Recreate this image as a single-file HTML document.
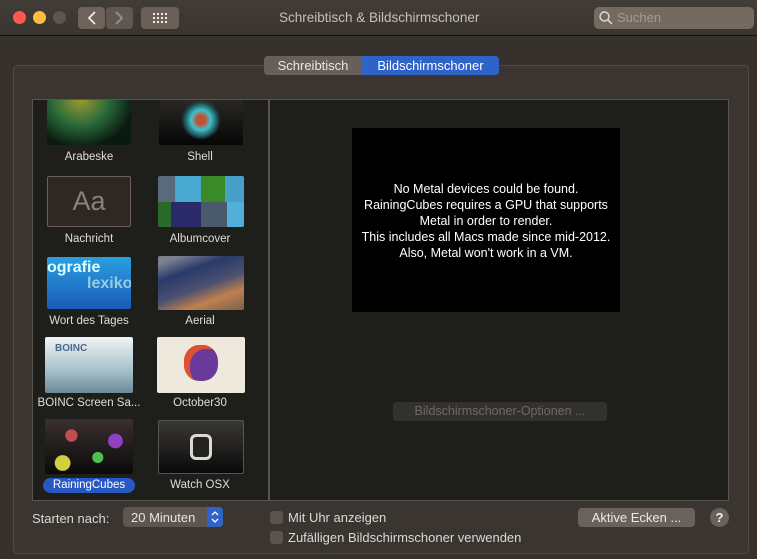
<!DOCTYPE html>
<html><head><meta charset="utf-8"><style>
*{box-sizing:border-box;margin:0;padding:0}
body{width:757px;height:559px;background:#36312d;font-family:"Liberation Sans",sans-serif;color:#dcd8d4;position:relative;overflow:hidden;font-size:13px}
.abs{position:absolute}
.tb{left:0;top:0;width:757px;height:36px;background:linear-gradient(#423c37,#3a3531);border-bottom:1px solid #111}
.dot{width:13px;height:13px;border-radius:50%;top:11px}
.btn{background:#6a6057;border-radius:4px}
.lbl{font-size:11.5px;color:#e0dcd8;text-align:center;white-space:nowrap}
.th{border-radius:2px;overflow:hidden}
.cb{width:13px;height:13px;border-radius:3px;background:#5a534d}
</style></head><body>
<div class="abs tb"></div>
<div class="abs dot" style="left:13px;background:#fc5753"></div>
<div class="abs dot" style="left:33px;background:#fdbc40"></div>
<div class="abs dot" style="left:53px;background:#5b5550"></div>
<div class="abs btn" style="left:78px;top:7px;width:27px;height:22px;background:#6d635a"></div>
<div class="abs btn" style="left:106px;top:7px;width:27px;height:22px;background:#605750"></div>
<svg class="abs" style="left:78px;top:7px" width="56" height="22"><path d="M17 5 L11 11 L17 17" stroke="#eee" stroke-width="1.8" fill="none"/><path d="M38 5 L44 11 L38 17" stroke="#9a918a" stroke-width="1.8" fill="none"/></svg>
<div class="abs btn" style="left:141px;top:7px;width:38px;height:22px"></div>
<svg class="abs" style="left:152px;top:12px" width="16" height="12"><g fill="#eee"><rect x="1" y="1" width="2" height="2"/><rect x="5" y="1" width="2" height="2"/><rect x="9" y="1" width="2" height="2"/><rect x="13" y="1" width="2" height="2"/><rect x="1" y="5" width="2" height="2"/><rect x="5" y="5" width="2" height="2"/><rect x="9" y="5" width="2" height="2"/><rect x="13" y="5" width="2" height="2"/><rect x="1" y="9" width="2" height="2"/><rect x="5" y="9" width="2" height="2"/><rect x="9" y="9" width="2" height="2"/><rect x="13" y="9" width="2" height="2"/></g></svg>
<div class="abs" style="left:279px;top:10px;font-size:13.5px;color:#c5bfb9">Schreibtisch &amp; Bildschirmschoner</div>
<div class="abs" style="left:594px;top:7px;width:160px;height:22px;background:#756a5f;border-radius:5px"></div>
<svg class="abs" style="left:598px;top:10px" width="16" height="16"><circle cx="6.5" cy="6.5" r="4.5" stroke="#ddd" stroke-width="1.4" fill="none"/><path d="M10 10 L14 14" stroke="#ddd" stroke-width="1.5"/></svg>
<div class="abs" style="left:617px;top:10px;color:#a59a8f">Suchen</div>

<div class="abs" style="left:13px;top:65px;width:736px;height:489px;border:1px solid #514a44;border-radius:5px;background:#3a3531"></div>
<div class="abs" style="left:264px;top:56px;width:235px;height:19px;border-radius:4px;background:#67605a"></div>
<div class="abs" style="left:362px;top:56px;width:137px;height:19px;border-radius:0 4px 4px 0;background:#2f63c8"></div>
<div class="abs" style="left:264px;top:58px;width:98px;text-align:center;color:#eae6e2">Schreibtisch</div>
<div class="abs" style="left:362px;top:58px;width:137px;text-align:center;color:#fff">Bildschirmschoner</div>

<div class="abs" style="left:32px;top:99px;width:697px;height:402px;border:1px solid #5a544e;background:#1e1e1a"></div>
<div class="abs" style="left:268px;top:99px;width:2px;height:402px;background:#5a544e"></div>
<div class="abs" style="left:352px;top:128px;width:268px;height:184px;background:#000"></div>
<div class="abs" style="left:352px;top:181px;width:268px;text-align:center;color:#fff;font-size:12.5px;line-height:16px">No Metal devices could be found.<br>RainingCubes requires a GPU that supports<br>Metal in order to render.<br>This includes all Macs made since mid-2012.<br>Also, Metal won't work in a VM.</div>
<div class="abs" style="left:393px;top:402px;width:214px;height:19px;border-radius:3px;background:#33312d;color:#6f6a65;text-align:center;line-height:19px;font-size:12.5px">Bildschirmschoner-Optionen ...</div>

<div class="abs th" style="left:47px;top:100px;width:84px;height:45px;background:radial-gradient(ellipse at 40% 0%,#9a9a30,#2a6a3a 40%,#0a1a10 75%)"></div>
<div class="abs th" style="left:159px;top:100px;width:84px;height:45px;background:linear-gradient(#2a2824,#060606)"><div style="margin:0 auto;width:40px;height:40px;border-radius:50%;background:radial-gradient(#c05030 15%,#40c0d0 35%,#1a4a4a 60%,transparent 70%)"></div></div>
<div class="abs lbl" style="left:40px;top:151px;width:98px">Arabeske</div>
<div class="abs lbl" style="left:151px;top:151px;width:98px">Shell</div>

<div class="abs th" style="left:47px;top:176px;width:84px;height:51px;background:#2d2823;border:1px solid #6a6058;font-size:27px;color:#8a8078;text-align:center;line-height:48px">Aa</div>
<div class="abs th" style="left:158px;top:176px;width:86px;height:51px;background:linear-gradient(90deg,#5a6a7a 0 20%,#48a8d0 20% 50%,#3a8a2a 50% 78%,#48a0c8 78%)"><div style="margin-top:26px;height:25px;background:linear-gradient(90deg,#2a6a2a 0 15%,#2a2a6a 15% 50%,#4a5a6a 50% 80%,#50b0d8 80%)"></div></div>
<div class="abs lbl" style="left:40px;top:233px;width:98px">Nachricht</div>
<div class="abs lbl" style="left:151px;top:233px;width:98px">Albumcover</div>

<div class="abs th" style="left:47px;top:257px;width:84px;height:52px;background:linear-gradient(#2aa0e0,#1a5ab8);color:#dff;font-weight:bold;font-size:16px;line-height:16px;overflow:hidden;padding-top:3px">ografie<br><span style="padding-left:40px;color:#9cd">lexiko</span></div>
<div class="abs th" style="left:158px;top:256px;width:86px;height:54px;background:linear-gradient(160deg,#7a8090 0 10%,#2a3a6a 30%,#4a5070 55%,#c08050 75%,#7a6050)"></div>
<div class="abs lbl" style="left:40px;top:315px;width:98px">Wort des Tages</div>
<div class="abs lbl" style="left:151px;top:315px;width:98px">Aerial</div>

<div class="abs th" style="left:45px;top:337px;width:88px;height:56px;background:linear-gradient(#f0f4f6,#a8c0c8 60%,#6a8a98)"><div style="margin:6px 0 0 10px;color:#4a6a8a;font-size:10px;font-weight:bold">BOINC</div></div>
<div class="abs th" style="left:157px;top:337px;width:88px;height:56px;background:#efe8dc"><div style="margin:8px auto;width:34px;height:36px;border-radius:45%;background:#6a3a9a;box-shadow:inset 6px 4px 0 #e05030"></div></div>
<div class="abs lbl" style="left:36px;top:397px;width:106px">BOINC Screen Sa...</div>
<div class="abs lbl" style="left:151px;top:397px;width:98px">October30</div>

<div class="abs th" style="left:45px;top:419px;width:88px;height:55px;background:radial-gradient(circle at 30% 30%,#c05050 8%,transparent 9%),radial-gradient(circle at 60% 70%,#50c050 8%,transparent 9%),radial-gradient(circle at 20% 80%,#d0d040 9%,transparent 10%),radial-gradient(circle at 80% 40%,#9040c0 9%,transparent 10%),linear-gradient(#3a3030,#0a0a0a)"></div>
<div class="abs th" style="left:158px;top:420px;width:86px;height:54px;background:linear-gradient(#3a3836,#0a0a0a);border:1px solid #555"><div style="margin:13px auto 0;width:22px;height:26px;border:3px solid #ddd8d0;border-radius:6px;background:#222"></div></div>
<div class="abs" style="left:43px;top:478px;width:92px;height:15px;border-radius:8px;background:#2758c4"></div>
<div class="abs lbl" style="left:40px;top:479px;width:98px;color:#fff">RainingCubes</div>
<div class="abs lbl" style="left:151px;top:479px;width:98px">Watch OSX</div>

<div class="abs" style="left:32px;top:511px">Starten nach:</div>
<div class="abs" style="left:123px;top:507px;width:100px;height:20px;border-radius:4px;background:#5d5650"></div>
<div class="abs" style="left:207px;top:507px;width:16px;height:20px;border-radius:0 4px 4px 0;background:#2f63c8"></div>
<svg class="abs" style="left:207px;top:507px" width="16" height="20"><path d="M5 8 L8 5 L11 8 M5 12 L8 15 L11 12" stroke="#fff" stroke-width="1.3" fill="none"/></svg>
<div class="abs" style="left:131px;top:510px;color:#e8e4e0">20 Minuten</div>
<div class="abs cb" style="left:270px;top:511px"></div>
<div class="abs cb" style="left:270px;top:531px"></div>
<div class="abs" style="left:288px;top:510px">Mit Uhr anzeigen</div>
<div class="abs" style="left:288px;top:530px">Zufälligen Bildschirmschoner verwenden</div>
<div class="abs" style="left:578px;top:508px;width:117px;height:19px;border-radius:4px;background:#69625c;text-align:center;line-height:19px;color:#eeeae6">Aktive Ecken ...</div>
<div class="abs" style="left:710px;top:508px;width:19px;height:19px;border-radius:50%;background:#69625c;text-align:center;line-height:19px;font-weight:bold;color:#eee">?</div>
</body></html>
